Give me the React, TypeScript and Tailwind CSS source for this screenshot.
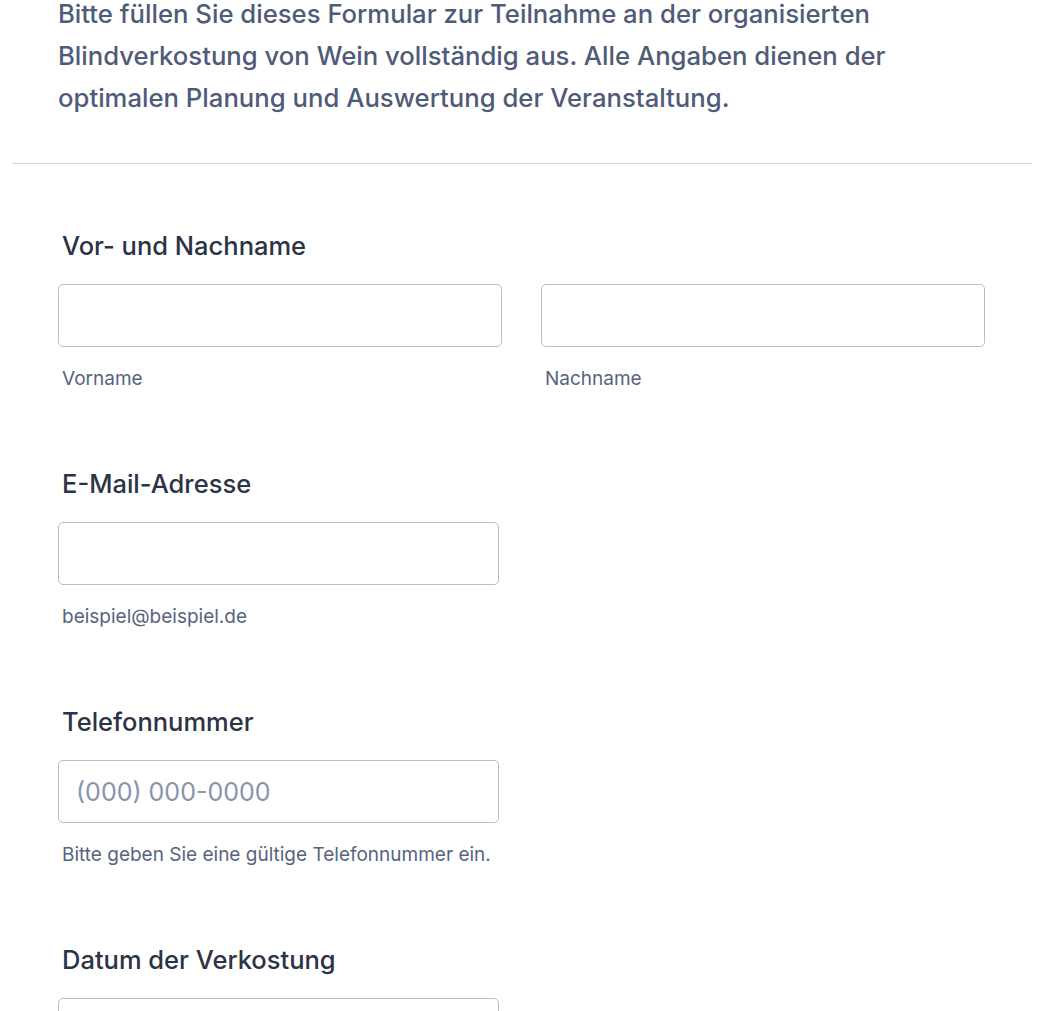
export default function App() {
  const font = { fontFamily: "Inter, 'Noto Sans', sans-serif" };

  return (
    <div style={font} className="min-h-screen bg-white overflow-hidden">
      <div className="px-3">
        {/* Header */}
        <div className="px-[46px] pb-[44px]">
          <p className="-mt-[7px] text-[25.7px] leading-[42px] font-medium text-[#4f5b78] max-w-[900px]">
            Bitte füllen Sie dieses Formular zur Teilnahme an der organisierten
            Blindverkostung von Wein vollständig aus. Alle Angaben dienen der
            optimalen Planung und Auswertung der Veranstaltung.
          </p>
        </div>
        <div className="border-t border-[#d3d6de]" />

        {/* Fields */}
        <div className="px-[46px] pt-[67px] flex flex-col gap-[79px]">
          <Field label="Vor- und Nachname">
            <div className="grid grid-cols-2 gap-[39px] w-[927px]">
              <div>
                <Input />
                <Sub>Vorname</Sub>
              </div>
              <div>
                <Input />
                <Sub>Nachname</Sub>
              </div>
            </div>
          </Field>

          <Field label="E-Mail-Adresse">
            <div className="w-[441px]">
              <Input />
              <Sub>beispiel@beispiel.de</Sub>
            </div>
          </Field>

          <Field label="Telefonnummer">
            <div className="w-[441px]">
              <Input placeholder="(000) 000-0000" />
              <Sub>Bitte geben Sie eine gültige Telefonnummer ein.</Sub>
            </div>
          </Field>

          <Field label="Datum der Verkostung">
            <div className="w-[441px]">
              <Input />
            </div>
          </Field>
        </div>
      </div>
    </div>
  );
}

function Field({ label, children }: { label: string; children: React.ReactNode }) {
  return (
    <div>
      <label className="block px-1 text-[25.5px] leading-[30px] font-medium text-[#2c3345] mb-[23px]">
        {label}
      </label>
      {children}
    </div>
  );
}

function Input({ placeholder }: { placeholder?: string }) {
  return (
    <input
      type="text"
      placeholder={placeholder}
      className="block w-full h-[63px] rounded-[5px] border border-[#b8bdc9] bg-white px-[17px] text-[25px] text-[#2c3345] placeholder:text-[#8894ab] outline-none"
    />
  );
}

function Sub({ children }: { children: React.ReactNode }) {
  return (
    <div className="px-1 mt-[21px] text-[19px] leading-[22px] text-[#57647e]">{children}</div>
  );
}
